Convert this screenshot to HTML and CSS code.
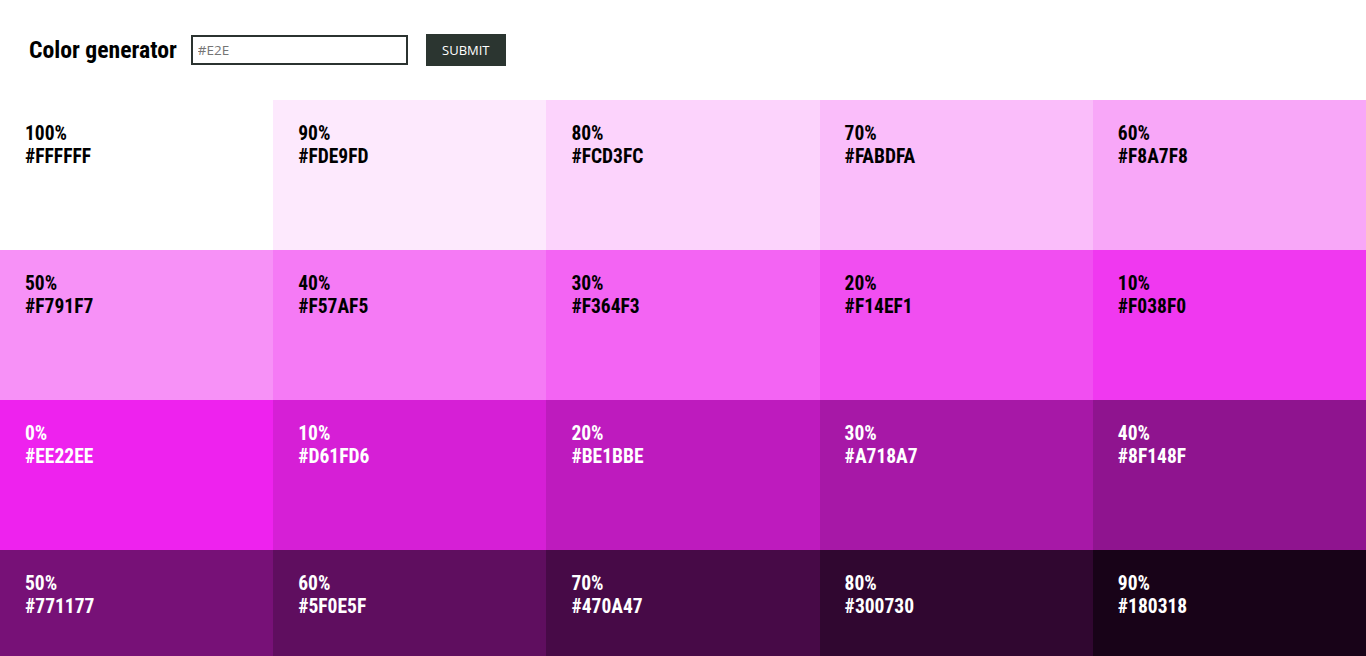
FILE: index.html
```html
<!DOCTYPE html>
<html>
<head>
<meta charset="utf-8">
<link rel="stylesheet" href="styles.css">
</head>
<body>
<header class="header">
  <h1 class="title">Color generator</h1>
  <form class="form">
    <input class="input" type="text" placeholder="#E2E">
    <button class="btn" type="button">SUBMIT</button>
  </form>
</header>
<main class="grid">
  <div class="cell dark-text" style="background:#FFFFFF"><p>100%</p><p>#FFFFFF</p></div>
  <div class="cell dark-text" style="background:#FDE9FD"><p>90%</p><p>#FDE9FD</p></div>
  <div class="cell dark-text" style="background:#FCD3FC"><p>80%</p><p>#FCD3FC</p></div>
  <div class="cell dark-text" style="background:#FABDFA"><p>70%</p><p>#FABDFA</p></div>
  <div class="cell dark-text" style="background:#F8A7F8"><p>60%</p><p>#F8A7F8</p></div>
  <div class="cell dark-text" style="background:#F791F7"><p>50%</p><p>#F791F7</p></div>
  <div class="cell dark-text" style="background:#F57AF5"><p>40%</p><p>#F57AF5</p></div>
  <div class="cell dark-text" style="background:#F364F3"><p>30%</p><p>#F364F3</p></div>
  <div class="cell dark-text" style="background:#F14EF1"><p>20%</p><p>#F14EF1</p></div>
  <div class="cell dark-text" style="background:#F038F0"><p>10%</p><p>#F038F0</p></div>
  <div class="cell light-text" style="background:#EE22EE"><p>0%</p><p>#EE22EE</p></div>
  <div class="cell light-text" style="background:#D61FD6"><p>10%</p><p>#D61FD6</p></div>
  <div class="cell light-text" style="background:#BE1BBE"><p>20%</p><p>#BE1BBE</p></div>
  <div class="cell light-text" style="background:#A718A7"><p>30%</p><p>#A718A7</p></div>
  <div class="cell light-text" style="background:#8F148F"><p>40%</p><p>#8F148F</p></div>
  <div class="cell light-text" style="background:#771177"><p>50%</p><p>#771177</p></div>
  <div class="cell light-text" style="background:#5F0E5F"><p>60%</p><p>#5F0E5F</p></div>
  <div class="cell light-text" style="background:#470A47"><p>70%</p><p>#470A47</p></div>
  <div class="cell light-text" style="background:#300730"><p>80%</p><p>#300730</p></div>
  <div class="cell light-text" style="background:#180318"><p>90%</p><p>#180318</p></div>
</main>
</body>
</html>
```
FILE: styles.css
```css
* { box-sizing: border-box; }
html, body { margin: 0; padding: 0; }
body {
  font-family: "Liberation Sans Narrow", "Roboto Condensed", "Open Sans Condensed", "DejaVu Sans Condensed", "Liberation Sans", sans-serif;
  font-stretch: condensed;
  background: #fff;
  color: #000;
}
.header {
  display: flex;
  align-items: center;
  height: 100px;
  padding: 0 0 0 29px;
}
.title {
  margin: 0 14px 0 0;
  font-size: 23.7px;
  font-weight: bold;
}
.form { display: flex; align-items: center; }
.input {
  width: 217px;
  height: 30px;
  border: 2px solid #2b3330;
  padding: 0 5px;
  font-family: "Open Sans", sans-serif;
  font-stretch: normal;
  font-size: 13.5px;
  margin: 0 18px 0 0;
  outline: none;
}
.input::placeholder { color: #757575; }
.btn {
  width: 80px;
  height: 32px;
  border: none;
  background: #2b3530;
  color: #fff;
  font-family: "Open Sans", sans-serif;
  font-stretch: normal;
  font-size: 13px;
  padding: 0;
  cursor: pointer;
}
.grid {
  display: grid;
  grid-template-columns: repeat(5, 1fr);
  grid-auto-rows: 150px;
}
.cell {
  padding: 22px 25px;
  font-size: 19.5px;
  font-weight: bold;
  line-height: 23px;
}
.cell p { margin: 0; }
.dark-text { color: #000; }
.light-text { color: #fff; }
```
